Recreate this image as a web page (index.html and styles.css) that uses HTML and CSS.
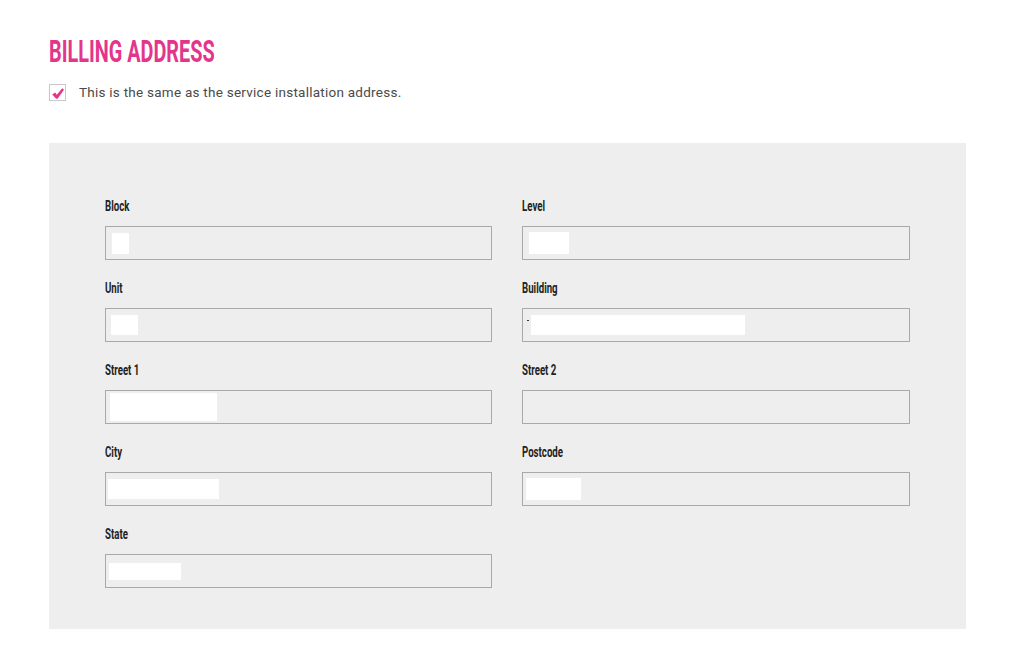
FILE: index.html
```html
<!DOCTYPE html>
<html>

<head>
    <meta name="viewport" content="width=device-width, initial-scale=1">
    <meta charset="utf-8">
    <link rel="stylesheet" href="styles.css">
</head>

<body>

    <div class="page">
        <h2 class="title"><span>BILLING ADDRESS</span></h2>

        <label class="same">
            <span class="box">
                <svg width="12" height="11" viewBox="0 0 12 11">
                    <path d="M0.2 6.4 L3.2 4.4 L4.8 6.8 L10.2 0.2 L12 1.8 L5.8 10.4 Q4.8 11.2 3.9 10.4 Z" fill="#e3358c"/>
                </svg>
            </span>
            <span class="same-text">This is the same as the service installation address.</span>
        </label>

        <div class="panel">
            <div class="grid">
                <div class="item">
                    <div class="label"><span>Block</span></div>
                    <div class="field"><span class="fill" style="margin-left:6px;width:17px;height:21px"></span></div>
                </div>
                <div class="item">
                    <div class="label"><span>Level</span></div>
                    <div class="field"><span class="fill" style="margin-left:6px;width:40px;height:22px"></span></div>
                </div>
                <div class="item">
                    <div class="label"><span>Unit</span></div>
                    <div class="field"><span class="fill" style="margin-left:5px;width:27px;height:20px"></span></div>
                </div>
                <div class="item">
                    <div class="label"><span>Building</span></div>
                    <div class="field"><span class="dash"></span><span class="fill" style="margin-left:2px;width:214px;height:20px"></span></div>
                </div>
                <div class="item">
                    <div class="label"><span>Street 1</span></div>
                    <div class="field"><span class="fill" style="margin-left:4px;width:107px;height:28px"></span></div>
                </div>
                <div class="item">
                    <div class="label"><span>Street 2</span></div>
                    <div class="field"></div>
                </div>
                <div class="item">
                    <div class="label"><span>City</span></div>
                    <div class="field"><span class="fill" style="margin-left:2px;width:111px;height:20px"></span></div>
                </div>
                <div class="item">
                    <div class="label"><span>Postcode</span></div>
                    <div class="field"><span class="fill" style="margin-left:3px;width:55px;height:22px"></span></div>
                </div>
                <div class="item">
                    <div class="label"><span>State</span></div>
                    <div class="field"><span class="fill" style="margin-left:3px;width:72px;height:17px"></span></div>
                </div>
            </div>
        </div>
    </div>

</body>

</html>
```

FILE: styles.css
```css
body {
    margin: 0;
    font-family: Roboto, "Liberation Sans", sans-serif;
    background: white;
}

* {
    box-sizing: border-box;
}

.page {
    padding: 0 0 0 49px;
}

.title {
    margin: 35px 0 0 0;
    height: 32px;
    font-size: 32px;
    line-height: 32px;
    font-weight: bold;
    color: #e3358c;
}

.title > span {
    display: inline-block;
    transform: scaleX(0.62);
    transform-origin: left center;
    white-space: nowrap;
}

.same {
    display: flex;
    align-items: center;
    margin-top: 17px;
    height: 17px;
    font-size: 13.5px;
    color: #4a4a4a;
    letter-spacing: 0.25px;
}

.same-text {
    margin-top: -1px;
}

.box {
    width: 17px;
    height: 17px;
    border: 1px solid #c8c8c8;
    background: white;
    display: flex;
    align-items: center;
    justify-content: center;
    margin-right: 13px;
    padding-top: 1px;
}

.panel {
    width: 917px;
    margin-top: 42px;
    background: #eeeeee;
    padding: 55px 56px 41px 56px;
}

.grid {
    display: grid;
    grid-template-columns: 387px 388px;
    column-gap: 30px;
    row-gap: 20px;
}

.label {
    height: 16px;
    line-height: 16px;
    font-size: 14px;
    font-weight: bold;
    color: #222;
}

.label > span {
    display: inline-block;
    transform: scaleX(0.69);
    transform-origin: left center;
    white-space: nowrap;
}

.field {
    margin-top: 12px;
    height: 34px;
    border: 1px solid #a9a9a9;
    background: #eeeeee;
    display: flex;
    align-items: center;
}

.fill {
    display: block;
    background: white;
}

.dash {
    display: block;
    width: 2px;
    height: 1px;
    background: #333;
    margin: -10px 0 0 4px;
}
```
